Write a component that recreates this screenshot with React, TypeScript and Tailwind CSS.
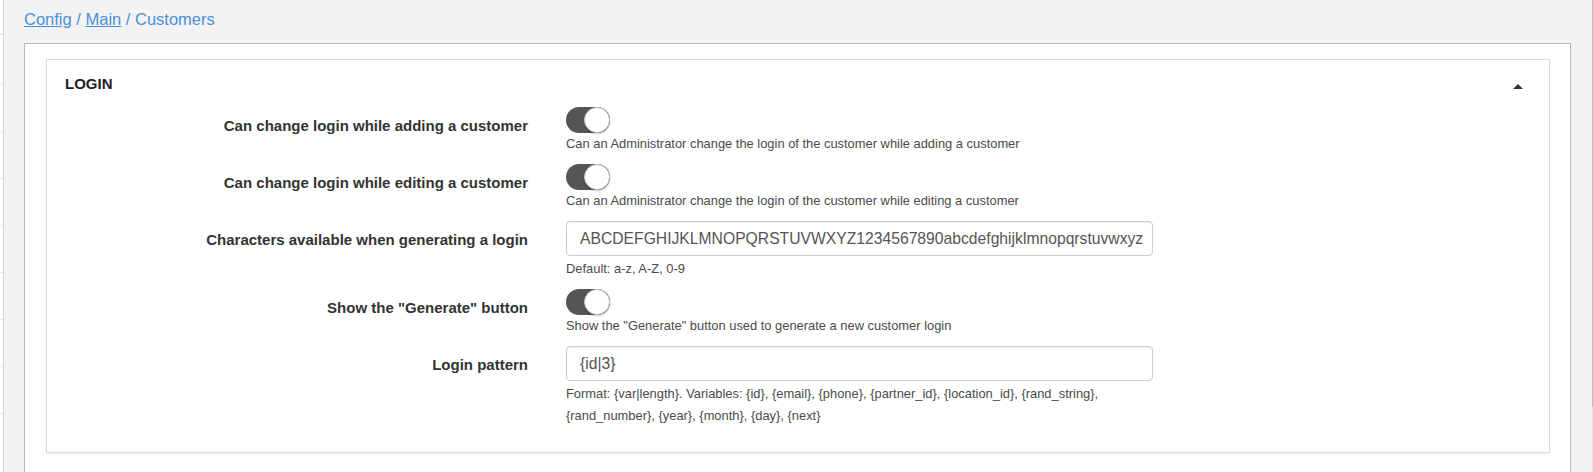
import React from "react";

function Toggle() {
  return (
    <div className="relative h-[26px] w-[44px] rounded-full bg-[#555555]">
      <div className="absolute right-0 top-0 h-[26px] w-[26px] rounded-full border border-[#c4c4c4] bg-white shadow-[0_1px_2px_rgba(0,0,0,0.25)]" />
    </div>
  );
}

function Row({
  label,
  children,
}: {
  label: string;
  children: React.ReactNode;
}) {
  return (
    <div className="flex">
      <div className="w-[463px] shrink-0 pt-[9px] text-right text-[15px] font-bold leading-[20px] text-[#333]">
        {label}
      </div>
      <div className="ml-[38px] w-[587px]">{children}</div>
    </div>
  );
}

function Help({ children, top = false }: { children: React.ReactNode; top?: boolean }) {
  return (
    <div className={`${top ? "mt-[2px]" : ""} text-[12.9px] leading-[22px] text-[#4a4a4a]`}>
      {children}
    </div>
  );
}

function Input({ value }: { value: string }) {
  return (
    <div className="flex h-[35px] items-center rounded-[4px] border border-[#cccccc] px-[13px] text-[15.7px] text-[#555] shadow-[inset_0_1px_1px_rgba(0,0,0,0.075)]">
      {value}
    </div>
  );
}

export default function App() {
  return (
    <div className="flex h-[472px] w-[1593px] overflow-hidden bg-[#f3f3f3] font-['Liberation_Sans',Arial,sans-serif]">
      {/* cut-off sidebar */}
      <div className="flex w-[4px] shrink-0 flex-col border-r border-[#d6d6d6] bg-white">
        <div className="h-[35px] rounded-br-[3px] border-b border-[#d0d0d0]" />
        <div className="h-[50px] border-b border-[#e6e6e6]" />
        {[...Array(7)].map((_, i) => (
          <div key={i} className="h-[47px] shrink-0 border-b border-[#e6e6e6]" />
        ))}
      </div>

      <div className="flex flex-1 flex-col pl-[20px] pr-[21px]">
        {/* breadcrumb */}
        <div className="h-[43px] pt-[9px] text-[16.5px] leading-[20px] text-[#4a90d9]">
          <a className="underline">Config</a> / <a className="underline">Main</a> / Customers
        </div>

        <div className="flex-1 border border-b-0 border-[#b8b8b8] bg-white pl-[21px] pr-[20px] pt-[15px]">
          <div className="border border-[#dcdcdc] pb-[25px] pl-[18px] pr-[26px] shadow-[0_1px_3px_rgba(0,0,0,0.08)]">
            <div className="mb-[13px] flex items-center justify-between pt-[14px]">
              <div className="text-[15px] font-bold leading-[20px] text-[#222]">LOGIN</div>
              <div className="mt-[4px] h-0 w-0 border-x-[5px] border-b-[5px] border-x-transparent border-b-[#333]" />
            </div>

            <div className="flex flex-col gap-[9px]">
              <Row label="Can change login while adding a customer">
                <Toggle />
                <Help>Can an Administrator change the login of the customer while adding a customer</Help>
              </Row>
              <Row label="Can change login while editing a customer">
                <Toggle />
                <Help>Can an Administrator change the login of the customer while editing a customer</Help>
              </Row>
              <Row label="Characters available when generating a login">
                <Input value="ABCDEFGHIJKLMNOPQRSTUVWXYZ1234567890abcdefghijklmnopqrstuvwxyz" />
                <Help top>Default: a-z, A-Z, 0-9</Help>
              </Row>
              <Row label='Show the "Generate" button'>
                <Toggle />
                <Help>Show the "Generate" button used to generate a new customer login</Help>
              </Row>
              <Row label="Login pattern">
                <Input value="{id|3}" />
                <Help top>
                  Format: {"{var|length}"}. Variables: {"{id}"}, {"{email}"}, {"{phone}"}, {"{partner_id}"},{" "}
                  {"{location_id}"}, {"{rand_string}"}, {"{rand_number}"}, {"{year}"}, {"{month}"}, {"{day}"},{" "}
                  {"{next}"}
                </Help>
              </Row>
            </div>
          </div>
        </div>
      </div>

      {/* window edge */}
      <div className="flex w-[1px] shrink-0 flex-col">
        <div className="h-[407px] bg-[#bdbdbd]" />
        <div className="flex-1 bg-[#e2e2e2]" />
      </div>
    </div>
  );
}
